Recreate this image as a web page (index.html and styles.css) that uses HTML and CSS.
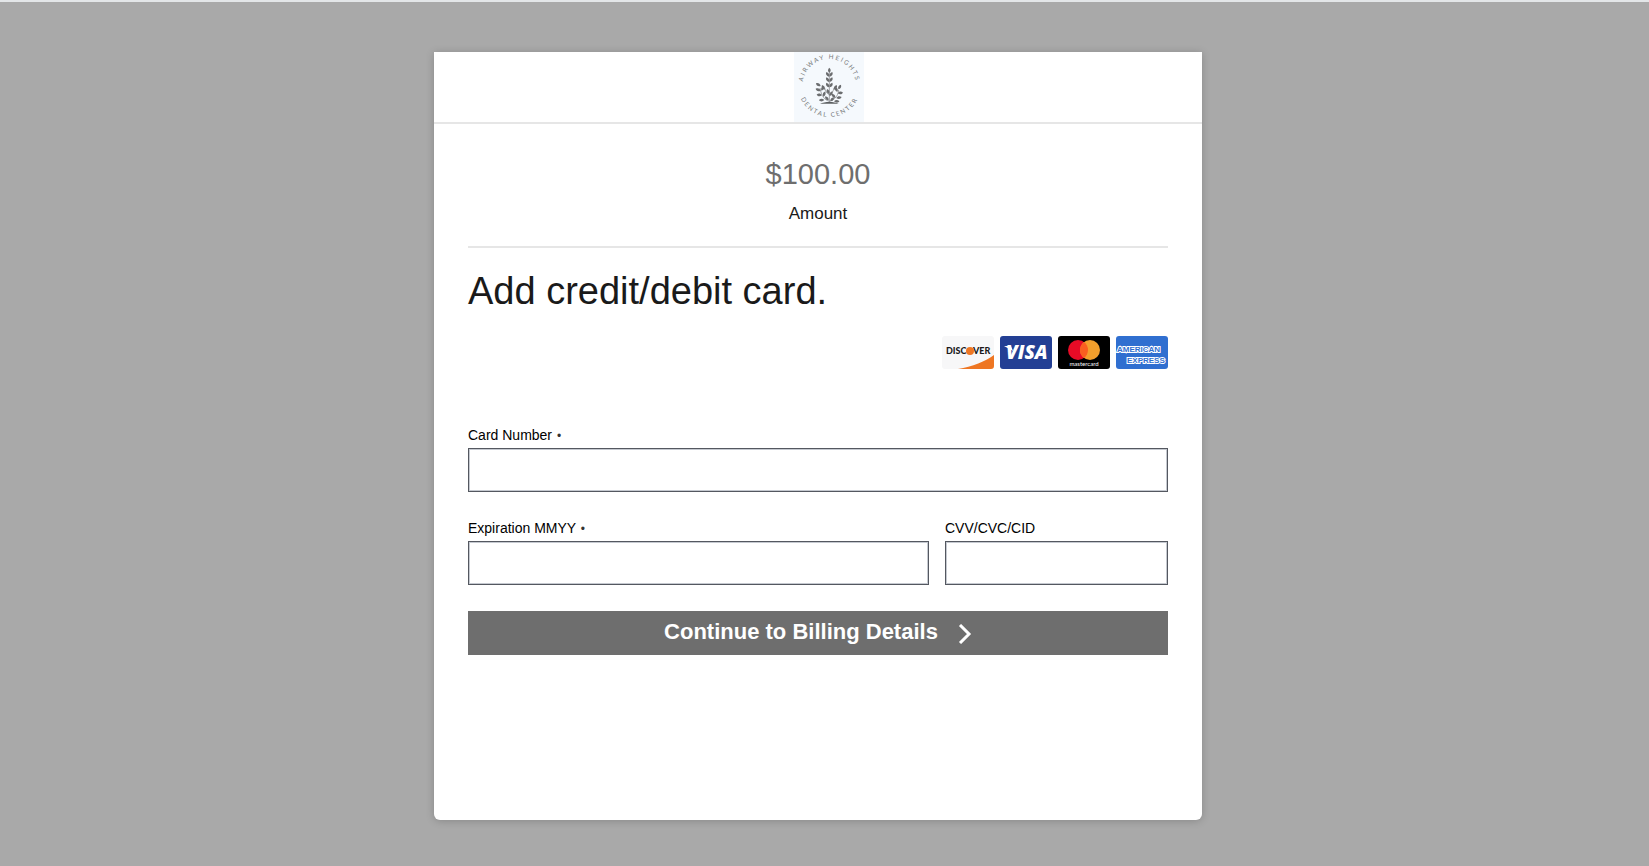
FILE: index.html
```html
<!DOCTYPE html>
<html lang="en">
<head>
    <meta charset="utf-8">
    <meta name="viewport" content="width=device-width, initial-scale=1">
    <title>Airway Heights Dental Center</title>
    <link rel="stylesheet" href="styles.css">
</head>

<body>
    <main class="card">
        <header class="cardHeader">
            <svg class="logo" viewBox="0 0 210 210" role="img" aria-label="Airway Heights Dental Center">
                <defs>
                    <path id="arcTop" d="M26 115V101a80 80 0 0 1 160 0V115"/>
                    <path id="arcBottom" d="M12 90V101a94 94 0 0 0 188 0V90"/>
                    <path id="leaf" d="M0 0C-8 -2 -11 -8 -8 -14C-1 -12 2 -7 0 0z"/>
                </defs>
                <rect width="210" height="210" fill="#f5f9fd"/>
                <g class="logoText">
                    <text><textPath href="#arcTop" startOffset="50%">AIRWAY HEIGHTS</textPath></text>
                    <text><textPath href="#arcBottom" startOffset="50%">DENTAL CENTER</textPath></text>
                </g>
                <path d="M106 60v92M106 148c-14 -4 -24 -16 -28 -40M106 148c14 -4 26 -14 28 -34M106 128c-8 -4 -12 -10 -14 -20M106 128c8 -4 12 -10 14 -20" stroke="#77797b" stroke-width="2" fill="none"/>
                <path d="M78 155c14 -7 42 -7 56 0z" fill="#5c5f61"/>
                <g fill="#6b6d6f">
                    <path d="M106 62c-6 -5 -5 -10 0 -15c5 5 6 10 0 15z"/>
                    <use href="#leaf" transform="translate(105 74)"/>
                    <use href="#leaf" transform="translate(107 74) scale(-1 1)"/>
                    <use href="#leaf" transform="translate(105 90)"/>
                    <use href="#leaf" transform="translate(107 90) scale(-1 1)"/>
                    <use href="#leaf" transform="translate(105 106)"/>
                    <use href="#leaf" transform="translate(107 106) scale(-1 1)"/>
                    <use href="#leaf" transform="translate(92 113)"/>
                    <use href="#leaf" transform="translate(120 113) scale(-1 1)"/>
                    <use href="#leaf" transform="translate(80 102) rotate(-30)"/>
                    <use href="#leaf" transform="translate(80 116) rotate(-40)"/>
                    <use href="#leaf" transform="translate(82 116) rotate(60)"/>
                    <use href="#leaf" transform="translate(133 112) rotate(60)"/>
                    <use href="#leaf" transform="translate(131 124) scale(-1 1) rotate(-50)"/>
                    <use href="#leaf" transform="translate(130 120) rotate(10)"/>
                    <use href="#leaf" transform="translate(84 130) rotate(-50)"/>
                    <use href="#leaf" transform="translate(127 138) scale(-1 1) rotate(-50)"/>
                    <use href="#leaf" transform="translate(88 134) rotate(50)"/>
                    <use href="#leaf" transform="translate(124 138) rotate(-10)"/>
                    <use href="#leaf" transform="translate(91 144) rotate(-60)"/>
                    <use href="#leaf" transform="translate(120 148) scale(-1 1) rotate(-60)"/>
                    <use href="#leaf" transform="translate(105 126) rotate(10)"/>
                    <use href="#leaf" transform="translate(107 132) scale(-1 1)"/>
                    <use href="#leaf" transform="translate(104 145) rotate(-10)"/>
                    <use href="#leaf" transform="translate(109 148) scale(-1 1) rotate(-10)"/>
                </g>
            </svg>
        </header>

        <div class="cardBody">
            <section class="amount">
                <div class="amountValue">$100.00</div>
                <div class="amountLabel">Amount</div>
            </section>

            <h1>Add credit/debit card.</h1>

            <div class="brands">
                <svg viewBox="0 0 52 33" role="img" aria-label="Discover">
                    <rect width="52" height="33" rx="3" fill="#f7f7f8"/>
                    <path d="M16 33C30 31 44 25 52 19v11a3 3 0 0 1 -3 3z" fill="#ee7623"/>
                    <text class="discover" x="4" y="18">DISC</text>
                    <text class="discover" x="31" y="18">VER</text>
                    <circle cx="28" cy="15" r="4" fill="#ee7623"/>
                </svg>
                <svg viewBox="0 0 52 33" role="img" aria-label="Visa">
                    <rect width="52" height="33" rx="3" fill="#233f94"/>
                    <path d="M4 10h7l2 5z" fill="#fff"/>
                    <text class="visa" x="6" y="23">VISA</text>
                </svg>
                <svg viewBox="0 0 52 33" role="img" aria-label="Mastercard">
                    <rect width="52" height="33" rx="3" fill="#000"/>
                    <circle cx="20" cy="14" r="10" fill="#e80b26"/>
                    <circle cx="32" cy="14" r="10" fill="#f39f2c"/>
                    <path d="M26 6a10 10 0 0 1 0 16a10 10 0 0 1 0 -16z" fill="#fa5f20"/>
                    <text class="mastercard" x="26" y="30">mastercard</text>
                </svg>
                <svg viewBox="0 0 52 33" role="img" aria-label="American Express">
                    <rect width="52" height="33" rx="3" fill="#306fd0"/>
                    <text class="amex" x="1" y="16">AMERICAN</text>
                    <text class="amex" x="11" y="27">EXPRESS</text>
                </svg>
            </div>

            <form class="cardForm">
                <div class="field fieldWide">
                    <label for="cardNumber">Card Number <span class="required">•</span></label>
                    <input id="cardNumber" type="text" inputmode="numeric" autocomplete="cc-number" required>
                </div>
                <div class="field">
                    <label for="expiration">Expiration MMYY <span class="required">•</span></label>
                    <input id="expiration" type="text" inputmode="numeric" autocomplete="cc-exp" required>
                </div>
                <div class="field">
                    <label for="cvv">CVV/CVC/CID</label>
                    <input id="cvv" type="text" inputmode="numeric" autocomplete="cc-csc">
                </div>
                <button class="continue" type="submit">
                    Continue to Billing Details
                    <svg viewBox="0 0 14 20" aria-hidden="true"><path d="M2 1l9 9l-9 9"/></svg>
                </button>
            </form>
        </div>
    </main>
</body>
</html>
```
FILE: styles.css
```css
* {
    box-sizing: border-box;
}
body {
    display: flex;
    flex-direction: column;
    align-items: center;
    min-height: 100vh;
    margin: 0;
    padding: 50px 13px 46px 0;
    border-top: 2px solid #e3e6e8;
    background-color: #a9a9a9;
    color: #1a1a1a;
    font-family: "Liberation Sans", Arial, Helvetica, sans-serif;
}
.card {
    display: flex;
    flex: 1;
    flex-direction: column;
    width: 100%;
    max-width: 768px;
    background-color: #fff;
    border-radius: 0 0 6px 6px;
    box-shadow: 0 1px 8px rgba(0, 0, 0, 0.2);
}
.cardHeader {
    display: flex;
    justify-content: center;
    padding-left: 22px;
    border-bottom: 2px solid #e6e6e6;
}
.logo {
    display: block;
    width: 70px;
    height: 70px;
}
.logoText {
    fill: #77797b;
    font-family: Lato, "Open Sans", sans-serif;
    font-size: 19px;
    letter-spacing: 5px;
    text-anchor: middle;
}
.cardBody {
    padding: 32px 34px;
}
.amount {
    padding-bottom: 20px;
    border-bottom: 2px solid #e6e6e6;
    text-align: center;
}
.amountValue {
    color: #6e6e6e;
    font-size: 29px;
    line-height: 36px;
}
.amountLabel {
    margin-top: 10px;
    font-size: 17px;
    line-height: 24px;
}
h1 {
    margin: 20px 0 22px;
    font-size: 38px;
    font-weight: normal;
    line-height: 46px;
}
.brands {
    display: flex;
    justify-content: flex-end;
    gap: 6px;
    margin-bottom: 56px;
}
.brands svg {
    display: block;
    width: 52px;
    height: 33px;
}
.discover {
    fill: #1a1a1a;
    font-family: Lato, sans-serif;
    font-size: 9px;
    font-weight: 900;
}
.visa {
    fill: #fff;
    font-family: "Open Sans", sans-serif;
    font-size: 19px;
    font-style: italic;
    font-weight: 800;
}
.mastercard {
    fill: #fff;
    font-family: Lato, sans-serif;
    font-size: 6px;
    text-anchor: middle;
}
.amex {
    fill: #306fd0;
    stroke: #fff;
    stroke-width: 2px;
    font-size: 8px;
    font-weight: bold;
    paint-order: stroke;
}
.cardForm {
    display: grid;
    grid-template-columns: 461fr 223fr;
    gap: 26px 16px;
}
.fieldWide,
.continue {
    grid-column: 1 / -1;
}
.field label {
    display: block;
    margin-bottom: 3px;
    color: #000;
    font-size: 14px;
    line-height: 20px;
}
.required {
    margin-left: 1px;
    color: #333;
    font-size: 12px;
    line-height: 1;
}
.field input {
    display: block;
    width: 100%;
    height: 44px;
    padding: 0 12px;
    background-color: #fff;
    border: 1px solid #545860;
    border-radius: 0;
    box-shadow: inset 0 0 0 1px #c5c9d0;
    font: inherit;
    font-size: 16px;
}
.continue {
    display: flex;
    align-items: center;
    justify-content: center;
    gap: 20px;
    height: 44px;
    padding: 0 0 2px;
    background-color: #6e6e6e;
    border: 0;
    color: #fff;
    font-family: inherit;
    font-size: 22px;
    font-weight: bold;
    cursor: pointer;
}
.continue svg {
    width: 14px;
    height: 20px;
    margin-top: 4px;
    fill: none;
    stroke: #fff;
    stroke-width: 3px;
}
```
